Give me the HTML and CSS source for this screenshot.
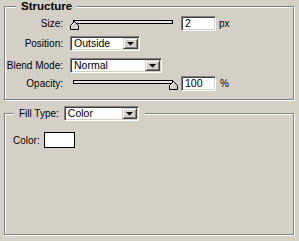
FILE: index.html
```html
<html>
<head>
    <meta charset="utf-8">
    <link rel="stylesheet" href="styles.css">
</head>
<body>
    <div class="dlg">
        <fieldset class="grp grpStruct">
            <legend class="grpTitle">Structure</legend>

            <div class="row rowSize">
                <div class="lbl">Size:</div>
                <div class="slider">
                    <div class="track"></div>
                    <svg class="thumb" style="left: 0px;" width="9" height="9" viewBox="0 0 9 9">
                        <path d="M0.5 8.5V4.5L4.5 0.5L8.5 4.5V8.5Z" fill="#d4d0c8" stroke="#000"/>
                        <path d="M1.5 7.5V4.9L4.5 1.9" fill="none" stroke="#fff"/>
                    </svg>
                </div>
                <div class="field">2</div>
                <span class="unit">px</span>
            </div>

            <div class="row rowPos">
                <div class="lbl">Position:</div>
                <div class="combo cmbPos">
                    <span class="cmbText">Outside</span>
                    <div class="cmbBtn"><svg width="7" height="4" viewBox="0 0 7 4"><path d="M0 0H7L3.5 3.5Z" fill="#000"/></svg></div>
                </div>
            </div>

            <div class="row rowBlend">
                <div class="lbl">Blend Mode:</div>
                <div class="combo cmbBlend">
                    <span class="cmbText">Normal</span>
                    <div class="cmbBtn"><svg width="7" height="4" viewBox="0 0 7 4"><path d="M0 0H7L3.5 3.5Z" fill="#000"/></svg></div>
                </div>
            </div>

            <div class="row rowOpac">
                <div class="lbl">Opacity:</div>
                <div class="slider">
                    <div class="track"></div>
                    <svg class="thumb" style="left: 99px;" width="9" height="9" viewBox="0 0 9 9">
                        <path d="M0.5 8.5V4.5L4.5 0.5L8.5 4.5V8.5Z" fill="#d4d0c8" stroke="#000"/>
                        <path d="M1.5 7.5V4.9L4.5 1.9" fill="none" stroke="#fff"/>
                    </svg>
                </div>
                <div class="field">100</div>
                <span class="unit unitPct">%</span>
            </div>
        </fieldset>

        <fieldset class="grp grpFill">
            <legend class="grpCombo">
                <div class="legRow">
                    <span class="legLbl">Fill Type:</span>
                    <div class="combo cmbFill">
                        <span class="cmbText">Color</span>
                        <div class="cmbBtn"><svg width="7" height="4" viewBox="0 0 7 4"><path d="M0 0H7L3.5 3.5Z" fill="#000"/></svg></div>
                    </div>
                </div>
            </legend>

            <div class="rowColor">
                <span>Color:</span>
                <div class="swatch"></div>
            </div>
        </fieldset>
    </div>
</body>
</html>
```

FILE: styles.css
```css
body {
    margin: 0;
    background-color: #d4d0c8;
    font-family: "Liberation Sans", Arial, sans-serif;
    font-size: 10px;
    color: #000;
}
.dlg {
    height: 241px;
    box-sizing: border-box;
    padding: 0 5px 6px 4px;
    display: flex;
    flex-direction: column;
}

/* etched group boxes */
.grp {
    margin: 0;
    min-width: 0;
    border: 1px solid #808080;
    box-shadow: 1px 1px 0 #fff, inset 1px 1px 0 #fff;
}
.grpStruct {
    padding: 3px 0 8px 0;
}
.grpFill {
    flex: 1;
    margin-top: 6px;
    padding: 11px 0 0 8px;
}
.grpTitle {
    margin-left: 11px;
    padding: 0 5px;
    height: 13px;
    line-height: 13px;
    font-size: 11.5px;
    font-weight: bold;
    background-color: #d4d0c8;
}
.grpCombo {
    padding: 0 6px;
    background-color: #d4d0c8;
}
.legRow {
    display: flex;
    align-items: center;
    height: 15px;
}
.legLbl {
    margin-right: 5px;
}

/* rows */
.row {
    display: flex;
    align-items: center;
    height: 15px;
}
.rowPos { margin-top: 5px; }
.rowBlend { margin-top: 7px; }
.rowOpac { margin-top: 3px; }
.lbl {
    width: 58px;
    margin-right: 7px;
    text-align: right;
    white-space: nowrap;
}

/* slider */
.slider {
    position: relative;
    width: 108px;
    height: 15px;
}
.track {
    height: 2px;
    margin: 4px 5px 0 3px;
    border: 1px solid #000;
    background-color: #ece9e2;
}
.thumb {
    position: absolute;
    top: 5px;
    display: block;
}

/* sunken boxes */
.field, .combo {
    height: 15px;
    box-sizing: border-box;
    border: 1px solid;
    border-color: #808080 #fff #fff #808080;
    box-shadow: inset 1px 1px 0 #404040, inset -1px -1px 0 #d4d0c8;
    background-color: #fff;
}
.field {
    width: 35px;
    margin-left: 3px;
    padding-left: 3px;
    line-height: 13px;
    font-size: 10.5px;
}
.unit {
    margin-left: 3px;
}
.unitPct {
    margin-left: 4px;
}
.combo {
    display: flex;
    padding: 1px;
}
.cmbText {
    flex: 1;
    padding-left: 2px;
    line-height: 11px;
    font-size: 10.5px;
}
.cmbBtn {
    width: 15px;
    box-sizing: border-box;
    border: 1px solid;
    border-color: #d4d0c8 #404040 #404040 #d4d0c8;
    box-shadow: inset 1px 1px 0 #fff, inset -1px -1px 0 #808080;
    background-color: #d4d0c8;
    display: flex;
    align-items: center;
    justify-content: center;
}
.cmbBtn svg {
    display: block;
}
.cmbPos { width: 70px; }
.cmbBlend { width: 92px; }
.cmbFill { width: 75px; }

/* fill section */
.rowColor {
    display: flex;
    align-items: center;
}
.swatch {
    width: 31px;
    height: 16px;
    box-sizing: border-box;
    margin-left: 4px;
    border: 1px solid #000;
    background-color: #fff;
}
```
